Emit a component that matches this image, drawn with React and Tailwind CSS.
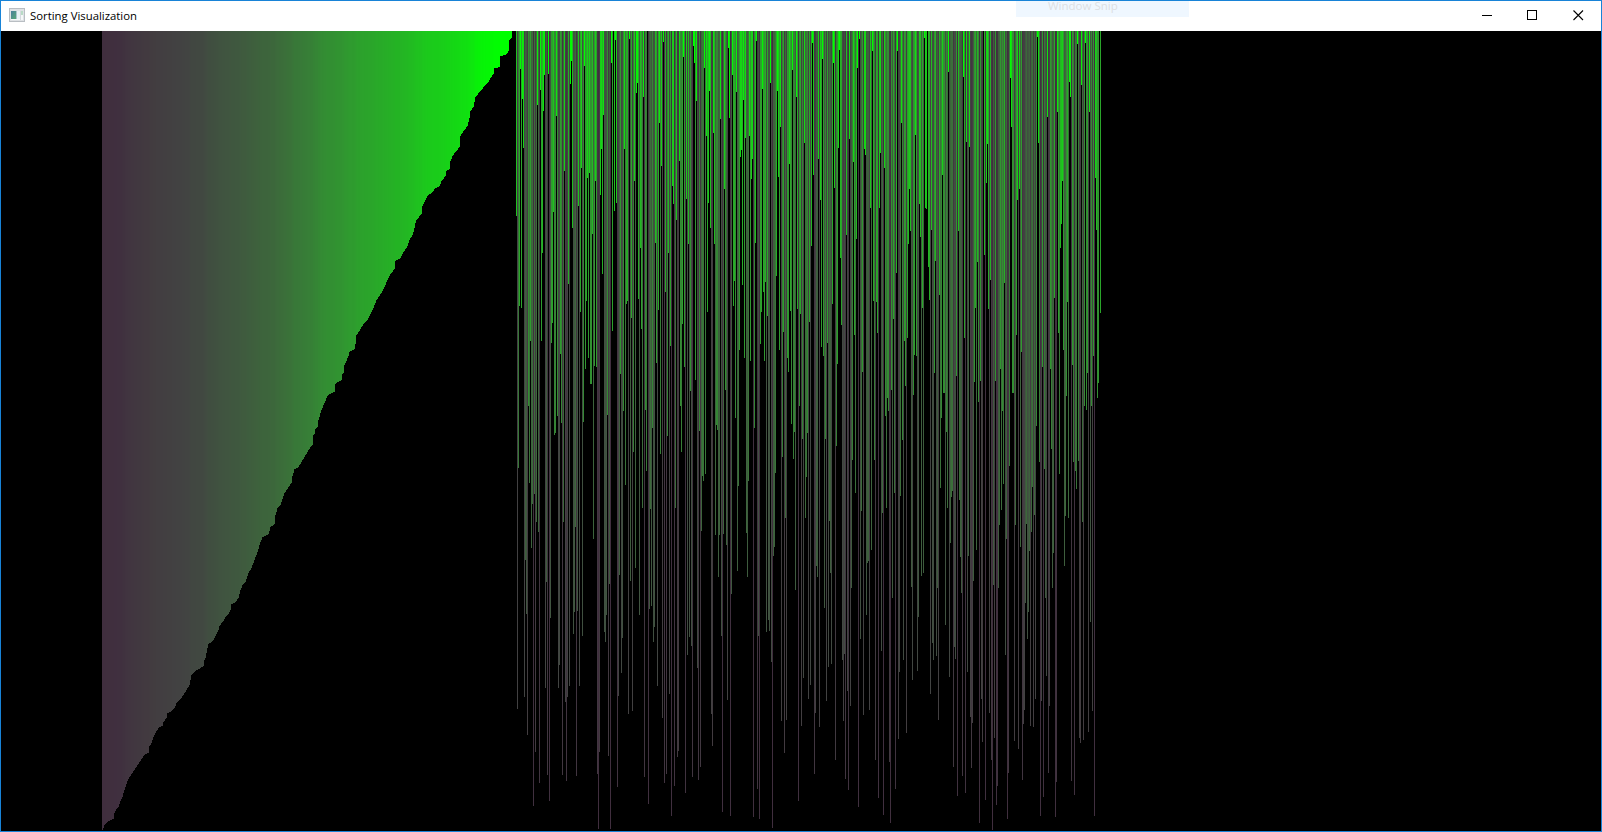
import React from 'react';

const CANVAS_HEIGHT = 800;
const FIRST_X = 101;

// Corners of the sorted run: [x, bar length]
const SORTED = [
  [101, 799], [102, 797], [103, 794], [105, 792], [107, 790], [112, 788], [113, 782], [115, 778], [117, 776], [119, 770],
  [121, 766], [122, 762], [124, 756], [126, 750], [128, 746], [131, 742], [134, 737], [136, 734], [139, 730], [142, 725],
  [144, 723], [147, 722], [148, 715], [150, 712], [152, 706], [155, 700], [158, 696], [161, 695], [162, 691], [165, 687],
  [166, 682], [169, 681], [172, 678], [174, 675], [175, 672], [178, 669], [182, 664], [185, 659], [188, 654], [190, 644],
  [194, 640], [199, 637], [202, 635], [203, 629], [204, 627], [206, 617], [207, 613], [210, 611], [212, 609], [214, 605],
  [217, 599], [218, 595], [221, 591], [222, 590], [224, 586], [227, 583], [230, 577], [230, 573], [234, 571], [237, 567],
  [239, 559], [241, 554], [244, 551], [247, 542], [250, 537], [253, 529], [256, 521], [259, 511], [261, 506], [267, 503],
  [269, 496], [273, 493], [274, 484], [276, 477], [279, 474], [281, 468], [283, 462], [287, 456], [290, 452], [291, 445],
  [293, 438], [297, 436], [300, 431], [303, 426], [306, 421], [309, 416], [312, 413], [312, 404], [314, 402], [314, 398],
  [316, 396], [317, 389], [320, 379], [323, 372], [326, 365], [328, 363], [333, 361], [334, 353], [336, 351], [340, 349],
  [341, 343], [343, 340], [343, 334], [347, 325], [348, 321], [353, 318], [355, 308], [355, 304], [359, 298], [362, 293],
  [366, 289], [369, 283], [371, 279], [375, 269], [378, 265], [382, 258], [386, 249], [389, 243], [393, 238], [394, 230],
  [399, 227], [402, 221], [406, 215], [408, 209], [411, 204], [412, 201],
  [414, 192], [415, 189], [419, 184], [421, 182], [421, 175], [424, 169], [426, 165], [431, 161], [434, 157], [438, 155],
  [440, 150], [444, 145], [445, 140], [449, 137], [449, 130], [451, 125], [454, 121], [459, 115], [459, 105], [462, 100],
  [466, 95], [468, 87], [469, 80], [472, 76], [474, 66], [479, 60], [483, 55], [487, 51], [489, 47], [493, 41],
  [493, 37], [499, 36], [499, 25], [504, 24], [508, 19], [508, 9], [510, 7], [511, 1],
];

// Remaining elements of the array in thirds of a pixel, measured 9 above the canvas
const UNSORTED_X = 516;
const UNSORTED = [
  563, 2042, 1320, 833, 122, 839, 212, 359, 2006, 1596, 1757, 2120, 1133, 1365, 938, 1560, 1428, 2333, 1398, 2171,
  1482, 230, 1512, 2264, 185, 938, 674, 248, 140, 1979, 1661, 2240, 137, 2318, 1769, 944, 884, 551, 1220, 1214,
  263, 1163, 1979, 1910, 977, 1184, 2240, 1481, 429, 2021, 2258, 2006, 767, 1973, 167, 98, 599, 1817, 1751, 1496,
  2243, 1748, 533, 1973, 851, 419, 1823, 1181, 113, 1022, 818, 449, 989, 434, 1067, 1067, 617, 1532, 1013, 458,
  1016, 2237, 2402, 2171, 500, 362, 737, 260, 1811, 1841, 1760, 1160, 2183, 1667, 2402, 104, 908, 0, 548, 35,
  524, 2276, 2003, 1640, 1037, 1934, 1829, 1148, 362, 1370, 827, 818, 2057, 32, 1658, 869, 2048, 1271, 458, 1619,
  194, 164, 812, 1760, 659, 902, 1439, 206, 2246, 1145, 1328, 0, 2327, 1742, 1442, 1733, 1200, 1841, 1796, 644,
  1004, 1973, 845, 284, 1277, 413, 2069, 41, 2264, 791, 2237, 1223, 674, 1997, 953, 2363, 473, 527, 2273, 1439,
  575, 2186, 2168, 398, 1133, 1271, 887, 86, 1016, 2294, 512, 1880, 647, 1826, 1088, 1853, 2246, 53, 104, 1055,
  218, 1919, 2255, 1208, 2216, 1508, 1343, 1358, 119, 1337, 323, 851, 524, 188,
  599, 2057, 2153, 314, 647, 1520, 1190, 1205, 1646, 1520, 272, 1823, 2351, 1517, 482, 1085, 1550, 2015, 59, 269,
  2363, 1697, 140, 833, 758, 1169, 191, 1628, 1373, 965, 386, 365, 770, 215, 989, 329, 1514, 1646, 1358, 323,
  998, 452, 392, 2366, 1200, 644, 38, 2282, 1823, 2372, 947, 851, 182, 791, 998, 761, 1811, 863, 1775, 1808,
  164, 1901, 2399, 1583, 1556, 1334, 743, 188, 446, 965, 296, 2078, 1286, 911, 2174, 1469, 2075, 989, 1031, 407,
  848, 1187, 125, 1292, 1211, 1685, 206, 842, 2318, 1133, 857, 2093, 1232, 1949, 344, 1469, 1346, 1214, 2012, 881,
  1970, 653, 44, 440, 2237, 2054, 1613, 1646, 392, 2096, 515, 956, 92, 983, 1739, 1232, 2018, 944, 1916, 1478,
  1634, 1907, 827, 104, 479, 2195, 1253, 1007, 359, 65, 689, 890, 1895, 2078, 1877, 2252, 620, 1988, 2285, 332,
  2033, 1679, 1295, 401, 920, 1394, 632, 119, 2336, 32, 1832, 1448, 1031, 2060, 362, 380, 1760, 1604, 1598, 2045,
  539, 1565, 68, 818, 1295, 2195, 821, 914, 2309, 539, 374, 1868, 1454, 2360, 419, 1163, 1439, 1109, 1148, 2201,
  2384, 1085, 1709, 872, 1394, 2282, 734, 68, 2132, 1931, 1403, 284, 1235, 1895, 938, 1073, 2114, 929, 647, 482,
  608, 1676, 1955, 1100, 980, 320, 983, 1928, 1766, 527, 626, 1643, 839, 1634, 29, 539, 542, 0, 716, 815,
  1997, 605, 1844, 1895, 1034, 698, 1883, 1679, 2075, 800, 1379, 1169, 440, 1094, 1094, 1790, 1211, 1439, 131, 1946,
  1544, 1406, 1388, 2216, 1856, 1892, 1043, 2303, 608, 1415, 1586, 1694, 2243, 146, 929, 2294, 341, 1931, 1583, 356,
  2066, 2219, 2084, 1658, 1061, 839, 1565, 701, 1121, 2384, 1058, 2012, 2141, 0, 680, 2315, 464, 347, 842, 2054,
  755, 2195, 2405, 1670, 2129, 1058, 2330, 2273, 1679, 1490, 1022, 1445, 1148, 1367, 764, 1880, 1532, 2372, 2234, 1313,
  149, 296, 1094, 1094, 2138, 1490, 920, 515, 2162, 482, 1556, 971, 2255, 2087, 2045, 1724, 1487, 1832, 1751, 1568,
  2093, 1511, 1376, 2096, 1460, 2012, 1193, 26, 344, 1301, 2363, 2018, 1016, 2306, 1322, 1709, 1943, 266, 2234, 2033,
  1022, 1262, 1679, 1574, 809, 2366, 2261, 251, 914, 1337, 659, 587, 458, 965, 1613, 1463, 1103, 821, 1469, 161,
  206, 2258, 1010, 1301, 2300, 1328, 1382, 47, 1298, 2129, 2144, 170, 1481, 2135, 1133, 44, 1145, 1034, 2111, 251,
  1781, 1133, 2048, 983, 2363, 449, 605, 1109, 1064, 0, 854,
];

// Bar colour by length
const STOPS = [
  [0, 0, 255, 0], [30, 0, 255, 0], [57, 6, 244, 6], [80, 14, 230, 14], [132, 22, 212, 22], [169, 28, 200, 28],
  [226, 36, 180, 36], [324, 47, 154, 47], [371, 51, 141, 51], [424, 55, 125, 55], [465, 59, 110, 58],
  [506, 61, 100, 60], [590, 64, 84, 64], [637, 65, 72, 65], [669, 66, 66, 66], [712, 66, 60, 64],
  [742, 65, 54, 64], [770, 64, 48, 63], [800, 64, 46, 62],
];

function colorFor(length) {
  let i = 1;
  while (i < STOPS.length - 1 && STOPS[i][0] < length) i++;
  const [l0, ...a] = STOPS[i - 1];
  const [l1, ...b] = STOPS[i];
  const t = Math.min(1, Math.max(0, (length - l0) / (l1 - l0)));
  return `rgb(${a.map((c, k) => Math.round(c + (b[k] - c) * t)).join(',')})`;
}

function sortedBars() {
  const bars = [];
  let i = 0;
  for (let x = FIRST_X; x < 511; x++) {
    while (i < SORTED.length - 2 && SORTED[i + 1][0] <= x) i++;
    const [x0, y0] = SORTED[i];
    const [x1, y1] = SORTED[i + 1];
    bars.push([x, Math.round(y0 + ((y1 - y0) * (x - x0)) / (x1 - x0))]);
  }
  return bars;
}

const BARS = [
  ...sortedBars(),
  ...UNSORTED.map((v, i) => [UNSORTED_X - 1 + i, Math.max(0, Math.round(v / 3) - 3)]),
];

function AppIcon() {
  return (
    <svg width="16" height="14" viewBox="0 0 16 14" shapeRendering="crispEdges" className="mb-0.5" aria-hidden="true">
      <defs>
        <linearGradient id="pane" x1="0" y1="0" x2="1" y2="1">
          <stop offset="0" stopColor="#4a7f9c" />
          <stop offset="1" stopColor="#58a878" />
        </linearGradient>
      </defs>
      <rect width="16" height="14" fill="#b9bec3" />
      <rect x="1" y="1" width="14" height="12" fill="#dfe2e5" />
      <rect x="2" y="3" width="12" height="9" fill="#f6f8f9" />
      <rect x="2" y="3" width="5" height="8" fill="url(#pane)" />
      <rect x="7" y="3" width="1" height="8" fill="#a9c4cc" />
      <rect x="8" y="3" width="3" height="8" fill="#e9f1f4" />
      <rect x="11" y="3" width="1" height="9" fill="#d5dade" />
      <rect x="12" y="3" width="2" height="4" fill="#b9dbc6" />
    </svg>
  );
}

function TitleBar() {
  return (
    <header className="relative flex h-[30px] items-center bg-white pl-2">
      <AppIcon />
      <h1 className="-mt-px ml-[5px] w-[107px] whitespace-nowrap font-['Open_Sans','Noto_Sans',sans-serif] text-[11.35px] leading-4 text-black">
        Sorting Visualization
      </h1>
      <div className="absolute left-[1015px] top-0 h-4 w-[173px] bg-[#eff7ff]">
        <span className="ml-8 block whitespace-nowrap font-['Open_Sans','Noto_Sans',sans-serif] text-[11.5px] leading-[10px] text-[#dcdfe3]">
          Window Snip
        </span>
      </div>
      <div className="mb-px ml-auto flex items-center pr-[17px]">
        <svg width="11" height="11" shapeRendering="crispEdges" aria-label="Minimize">
          <path d="M1 5.5h10" stroke="#000" />
        </svg>
        <svg width="11" height="11" shapeRendering="crispEdges" className="ml-[34px]" aria-label="Maximize">
          <path d="M1.5 .5h9v9h-9z" fill="none" stroke="#000" />
        </svg>
        <svg width="11" height="11" className="ml-9" aria-label="Close">
          <path d="M.5 .5l9.5 9.5M10 .5l-9.5 9.5" stroke="#000" strokeWidth="1.1" />
        </svg>
      </div>
    </header>
  );
}

export default function App() {
  return (
    <div className="flex h-[832px] w-[1602px] flex-col overflow-hidden border border-[#1883d7] bg-black">
      <TitleBar />
      <main className="h-[800px] bg-black">
        <svg width="1600" height={CANVAS_HEIGHT} shapeRendering="crispEdges" className="block">
          {BARS.map(([x, length]) => (
            <rect key={x} x={x} y="0" width="1" height={length} fill={colorFor(length)} />
          ))}
        </svg>
      </main>
    </div>
  );
}
